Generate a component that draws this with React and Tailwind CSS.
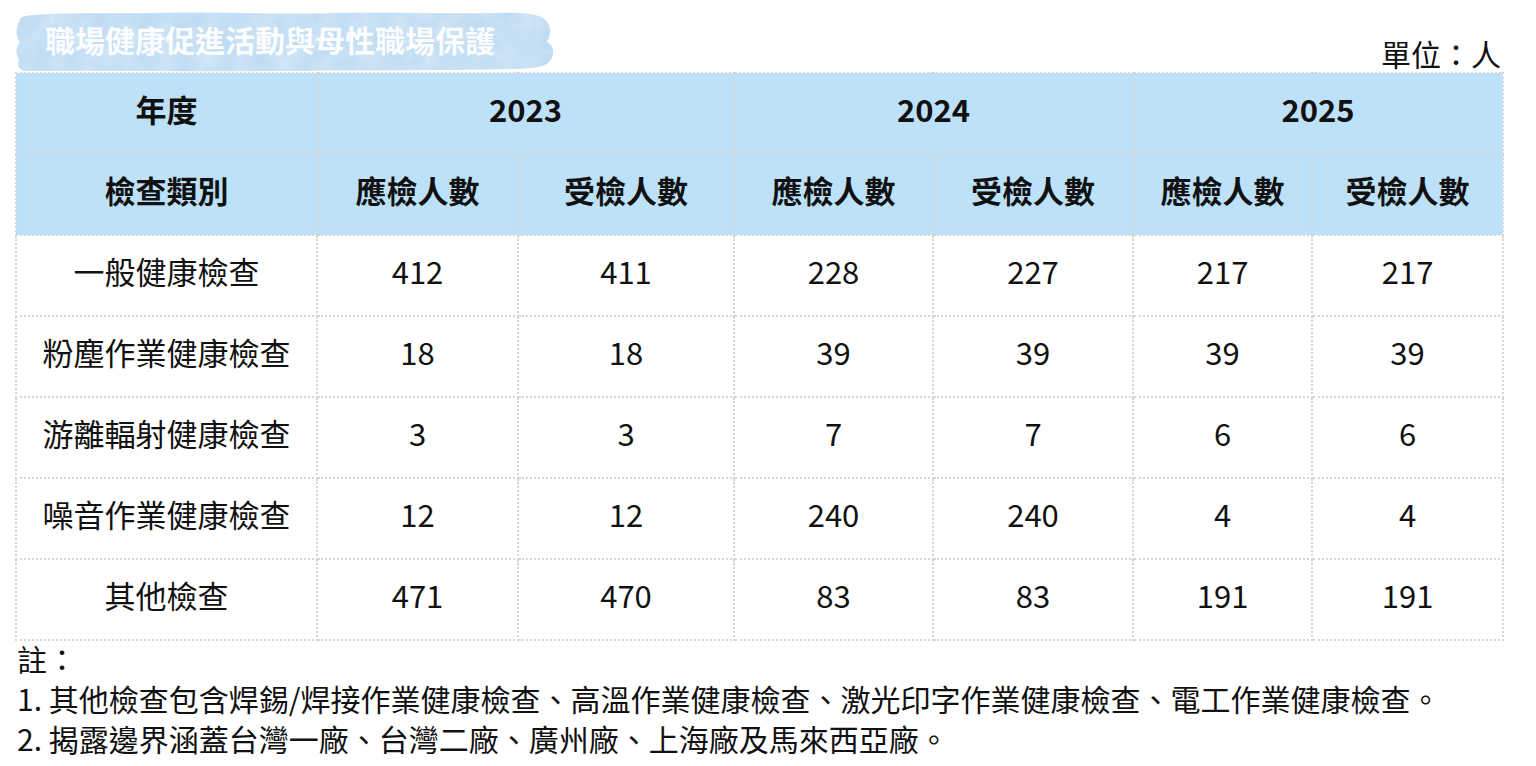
import React from 'react'

const cols = [301, 201, 216, 199, 200, 179, 191]

const rows = [
    ['一般健康檢查', '412', '411', '228', '227', '217', '217'],
    ['粉塵作業健康檢查', '18', '18', '39', '39', '39', '39'],
    ['游離輻射健康檢查', '3', '3', '7', '7', '6', '6'],
    ['噪音作業健康檢查', '12', '12', '240', '240', '4', '4'],
    ['其他檢查', '471', '470', '83', '83', '191', '191'],
]

const cell = 'border-2 border-dotted border-[#d6d6d6] text-center align-middle p-0 pb-[8px]'

function Banner() {
    return (
        <div className='relative w-[543px] h-[62px] flex items-center'>
            <svg className='absolute inset-0' width='543' height='62' viewBox='0 0 543 62'>
                <defs>
                    <filter id='wc' x='0' y='0' width='100%' height='100%'>
                        <feTurbulence type='fractalNoise' baseFrequency='0.05' numOctaves='3' seed='4' result='n' />
                        <feColorMatrix in='n' type='matrix' values='0 0 0 0 1  0 0 0 0 1  0 0 0 0 1  0 0 0 0.35 0' result='w' />
                        <feComposite in='w' in2='SourceGraphic' operator='in' result='t' />
                        <feMerge>
                            <feMergeNode in='SourceGraphic' />
                            <feMergeNode in='t' />
                        </feMerge>
                    </filter>
                </defs>
                <path
                    filter='url(#wc)'
                    fill='#b9d9f2'
                    d='M10 6 C40 2 90 4 140 3 C200 1 260 5 320 3 C380 2 430 4 480 3 C510 2 528 4 532 12 C538 20 534 28 532 32 C540 36 540 46 534 52 C528 58 515 58 500 59 C420 61 340 60 260 61 C180 62 90 60 10 61 C4 60 2 56 4 50 C1 44 0 38 5 32 C0 26 1 18 4 12 C5 8 7 7 10 6 Z'
                />
            </svg>
            <span className='relative pl-[30px] pb-[4px] text-[30px] font-bold text-white/95 leading-none'>職場健康促進活動與母性職場保護</span>
        </div>
    )
}

export default function App() {
    return (
        <div className='w-[1536px] bg-white text-[#111] pl-[15px] pt-[10px]' style={{ fontFamily: '"Noto Sans CJK TC", "Noto Sans", sans-serif' }}>
            <div className='w-[1487px] flex items-end justify-between'>
                <Banner />
                <div className='text-[30px] leading-none pb-[4px] pr-[1px]'>單位：人</div>
            </div>
            <table className='border-collapse table-fixed w-[1487px] text-[31px]'>
                <colgroup>
                    {cols.map((w, i) => <col key={i} style={{ width: w }} />)}
                </colgroup>
                <thead>
                    <tr className='h-[81px] bg-[#bde1f8] font-bold'>
                        <th className={cell}>年度</th>
                        <th className={cell} colSpan={2}>2023</th>
                        <th className={cell} colSpan={2}>2024</th>
                        <th className={cell} colSpan={2}>2025</th>
                    </tr>
                    <tr className='h-[81px] bg-[#bde1f8] font-bold'>
                        <th className={cell}>檢查類別</th>
                        <th className={cell}>應檢人數</th>
                        <th className={cell}>受檢人數</th>
                        <th className={cell}>應檢人數</th>
                        <th className={cell}>受檢人數</th>
                        <th className={cell}>應檢人數</th>
                        <th className={cell}>受檢人數</th>
                    </tr>
                </thead>
                <tbody>
                    {rows.map((r, i) => (
                        <tr key={i} className='h-[81px]'>
                            {r.map((v, j) => <td key={j} className={cell}>{v}</td>)}
                        </tr>
                    ))}
                </tbody>
            </table>
            <div className='text-[30px] leading-[40px] pl-[2px] -mt-[3px]'>
                <p>註：</p>
                <p>1. 其他檢查包含焊錫/焊接作業健康檢查、高溫作業健康檢查、激光印字作業健康檢查、電工作業健康檢查。</p>
                <p>2. 揭露邊界涵蓋台灣一廠、台灣二廠、廣州廠、上海廠及馬來西亞廠。</p>
            </div>
        </div>
    )
}
